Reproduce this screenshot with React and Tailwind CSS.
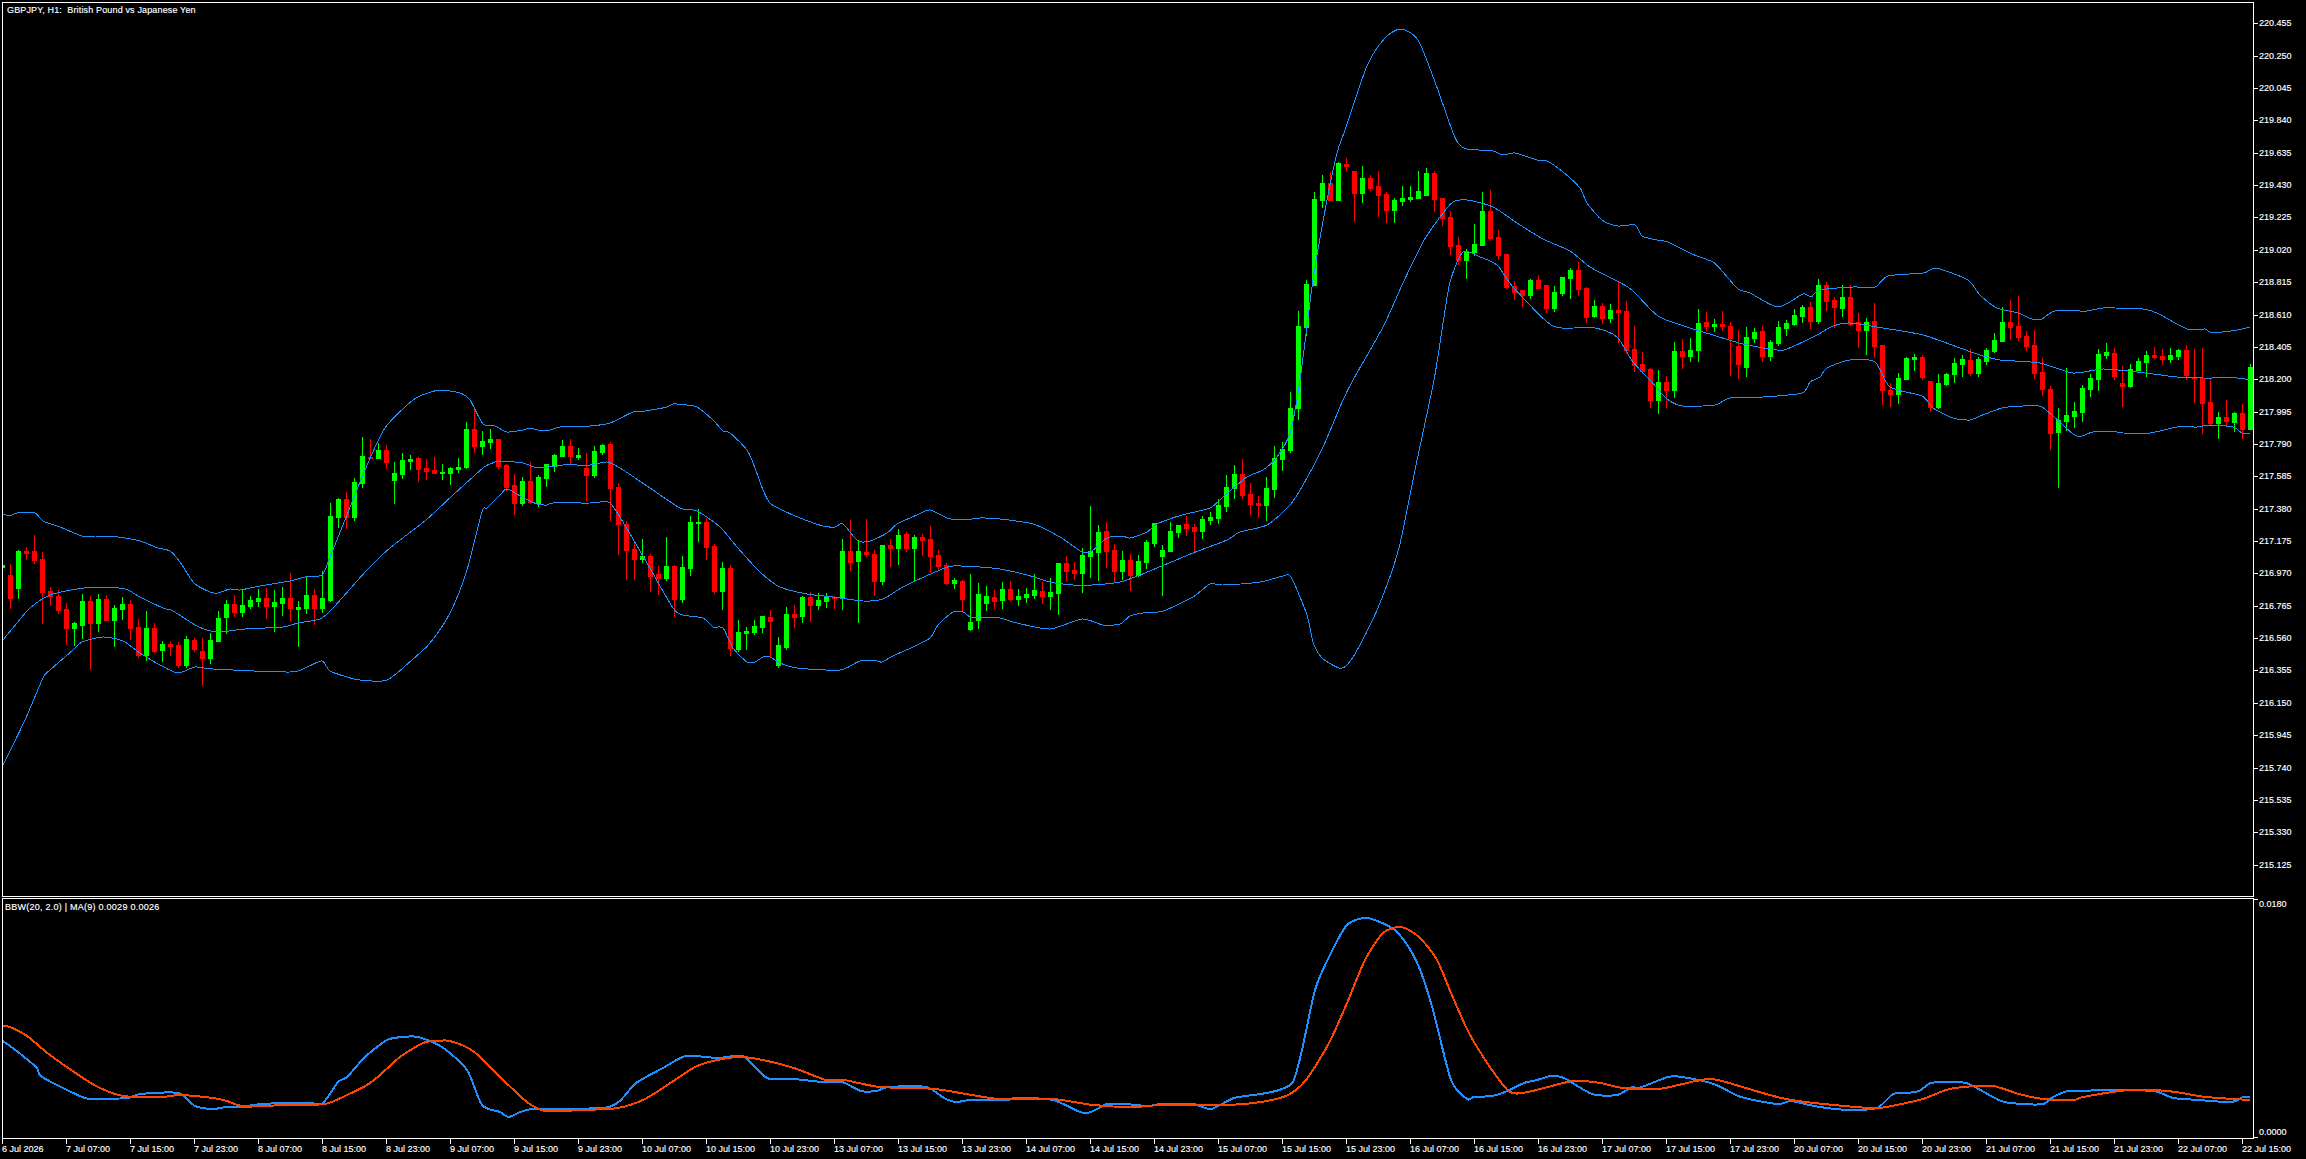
const PRICES = ['220.455','220.250','220.045','219.840','219.635','219.430','219.225','219.020','218.815','218.610','218.405','218.200','217.995','217.790','217.585','217.380','217.175','216.970','216.765','216.560','216.355','216.150','215.945','215.740','215.535','215.330','215.125']

const TIMES = ['6 Jul 2026','7 Jul 07:00','7 Jul 15:00','7 Jul 23:00','8 Jul 07:00','8 Jul 15:00','8 Jul 23:00','9 Jul 07:00','9 Jul 15:00','9 Jul 23:00','10 Jul 07:00','10 Jul 15:00','10 Jul 23:00','13 Jul 07:00','13 Jul 15:00','13 Jul 23:00','14 Jul 07:00','14 Jul 15:00','14 Jul 23:00','15 Jul 07:00','15 Jul 15:00','15 Jul 23:00','16 Jul 07:00','16 Jul 15:00','16 Jul 23:00','17 Jul 07:00','17 Jul 15:00','17 Jul 23:00','20 Jul 07:00','20 Jul 15:00','20 Jul 23:00','21 Jul 07:00','21 Jul 15:00','21 Jul 23:00','22 Jul 07:00','22 Jul 15:00']

// [bull, high, bodyTop, bodyBottom, low] in page pixels, one bar every 8px
const CANDLES = [
  [1,565,565,567,567],[0,564,575,598,608],[1,550,551,588,598],[0,547,551,553,559],[0,535,551,560,563],
  [0,552,559,592,623],[0,587,591,596,605],[0,590,596,610,613],[0,603,609,628,644],[1,622,623,628,645],
  [1,594,601,625,638],[0,596,601,623,669],[1,594,599,623,631],[0,595,599,620,620],[1,605,608,620,646],
  [1,597,604,609,619],[0,600,604,628,639],[0,619,627,655,657],[1,611,628,655,660],[0,623,628,651,652],
  [1,641,644,650,661],[0,641,644,646,655],[0,642,645,665,667],[1,636,639,665,667],[0,638,640,649,651],
  [0,638,651,658,685],[1,633,640,658,663],[1,611,618,641,641],[1,600,604,617,633],[0,595,604,612,616],
  [1,589,605,612,616],[1,596,600,606,608],[1,589,598,601,606],[0,588,598,606,618],[1,590,602,606,631],
  [1,587,598,603,615],[0,573,598,608,620],[1,601,607,609,646],[1,577,595,608,613],[0,589,595,608,624],
  [1,571,598,608,612],[1,503,516,600,601],[1,498,499,517,527],[0,492,499,517,528],[1,478,482,517,520],
  [1,437,456,483,487],[0,439,457,458,458],[1,443,450,458,458],[0,445,450,462,468],[1,462,473,480,503],
  [1,453,460,474,478],[1,455,459,461,469],[0,457,458,469,481],[0,459,468,471,479],[0,457,470,473,473],
  [1,464,472,473,479],[1,467,468,473,484],[1,458,467,469,472],[1,422,429,467,468],[0,409,429,446,452],
  [1,431,441,446,454],[1,429,439,442,448],[0,439,439,466,468],[0,464,465,487,490],[0,474,485,503,514],
  [1,477,481,503,505],[0,462,481,502,503],[1,475,477,503,506],[1,464,464,478,486],[1,454,455,466,471],
  [1,440,446,456,456],[0,439,446,456,463],[1,448,455,457,459],[0,453,468,475,500],[1,446,451,475,477],
  [1,444,445,452,454],[0,442,444,488,520],[0,483,487,524,554],[0,521,524,550,579],[0,542,549,559,579],
  [1,539,556,559,562],[0,554,556,576,591],[0,566,574,578,594],[1,537,566,578,580],[0,565,566,599,616],
  [1,556,567,599,602],[1,516,522,568,575],[1,509,522,523,541],[0,518,522,547,559],[0,544,546,591,593],
  [1,562,568,591,609],[0,565,568,648,655],[1,620,632,649,651],[1,627,631,633,649],[1,620,626,632,634],
  [1,616,616,627,632],[0,610,617,621,657],[1,637,645,665,667],[1,607,614,647,649],[0,605,614,617,627],
  [1,596,597,616,622],[0,592,597,605,621],[1,593,600,605,609],[1,593,597,601,607],[0,596,597,598,608],
  [1,539,551,598,609],[0,520,551,562,570],[1,540,551,561,622],[0,519,552,554,556],[0,550,554,581,595],
  [1,545,545,581,584],[0,539,545,548,566],[1,529,535,548,564],[0,532,534,548,551],[1,535,537,548,580],
  [0,534,537,540,555],[0,526,539,556,572],[0,550,555,566,570],[0,563,565,583,584],[1,578,580,583,588],
  [0,580,581,599,610],[1,574,622,629,630],[1,583,594,620,628],[1,586,596,603,610],[0,590,597,601,608],
  [1,582,589,600,608],[0,581,589,599,600],[1,589,596,599,605],[1,588,594,597,602],[1,574,590,595,598],
  [0,582,591,596,603],[1,578,592,596,609],[1,563,563,593,614],[0,556,563,571,580],[0,562,570,573,579],
  [1,548,555,573,592],[1,506,551,556,577],[1,525,532,552,580],[0,522,531,551,567],[0,544,550,571,581],
  [1,551,560,571,579],[0,554,560,575,590],[1,555,561,575,576],[1,540,542,562,568],[1,523,523,543,546],
  [1,545,550,556,595],[1,522,531,551,551],[1,525,525,532,537],[0,516,524,528,535],[0,524,527,531,553],
  [1,516,519,531,538],[1,512,517,520,524],[1,499,505,518,523],[1,475,487,506,511],[1,465,474,488,498],
  [0,459,474,495,498],[0,483,494,504,514],[0,496,503,505,517],[1,477,488,505,520],[1,446,458,489,497],
  [1,442,449,459,470],[1,392,408,450,452],[1,311,326,408,419],[1,280,284,327,335],[1,192,199,285,285],
  [1,175,183,200,207],[0,172,183,200,200],[1,162,163,200,200],[0,158,164,166,170],[0,171,171,193,221],
  [1,166,178,193,202],[0,175,178,188,190],[0,171,186,195,216],[0,192,194,210,222],[1,198,200,210,222],
  [1,186,198,201,205],[1,186,197,199,201],[1,171,191,198,198],[1,168,173,195,195],[0,171,173,199,211],
  [0,198,198,218,225],[0,211,217,246,254],[0,237,245,260,264],[1,249,251,260,278],[1,224,244,252,255],
  [1,192,211,245,245],[0,190,211,238,240],[0,230,237,255,259],[0,254,254,287,288],[0,281,286,292,299],
  [0,290,290,295,306],[1,279,280,295,298],[0,275,280,288,288],[0,285,285,308,312],[1,286,292,308,311],
  [1,277,277,293,295],[1,268,270,278,298],[0,262,270,289,295],[0,287,288,317,322],[1,300,306,316,317],
  [0,303,306,318,323],[1,304,310,318,322],[0,282,310,312,342],[0,301,311,350,353],[0,326,349,365,371],
  [0,352,364,371,373],[0,368,369,400,407],[1,370,382,400,413],[0,376,382,390,407],[1,342,351,390,397],
  [0,339,351,356,368],[1,338,350,356,361],[1,309,323,350,361],[0,312,322,326,330],[1,319,324,326,331],
  [0,311,324,326,330],[0,322,326,338,375],[0,330,346,364,378],[1,327,337,367,376],[1,328,332,338,342],
  [0,326,331,356,361],[1,340,342,356,360],[1,321,327,343,345],[1,320,323,328,335],[1,309,315,324,325],
  [1,305,307,316,322],[0,302,307,321,328],[1,279,285,321,323],[0,282,285,301,310],[0,297,300,307,327],
  [1,285,297,308,316],[0,285,297,324,325],[0,313,322,330,347],[1,318,322,330,354],[0,303,321,346,357],
  [0,345,345,390,404],[0,383,390,394,406],[1,373,378,394,403],[1,357,358,379,379],[1,354,357,359,370],
  [0,355,357,377,379],[0,381,381,407,411],[1,374,383,407,408],[1,373,374,384,385],[1,358,363,374,382],
  [1,355,359,364,376],[0,349,360,373,375],[1,357,359,373,376],[1,348,350,361,364],[1,333,340,351,352],
  [1,307,322,341,341],[0,300,322,327,339],[0,296,326,337,340],[0,331,336,346,350],[0,330,345,373,378],
  [0,358,372,389,395],[0,386,389,433,449],[1,408,420,432,487],[1,368,415,421,430],[1,402,411,416,427],
  [1,385,388,412,421],[1,374,378,389,396],[1,349,354,379,390],[1,343,352,355,358],[0,348,353,376,379],
  [0,366,383,386,406],[1,364,369,386,387],[1,358,361,370,370],[1,351,355,362,376],[0,347,355,357,358],
  [0,349,356,359,364],[1,348,355,359,362],[1,349,350,356,359],[0,345,350,375,379],[0,349,377,378,402],
  [0,348,378,403,433],[0,379,402,423,425],[1,412,417,423,438],[0,400,417,421,426],[1,412,413,422,431],
  [0,404,413,429,438],[1,364,367,429,429],
]

const BAND_UPPER = [3,514,10,516,17,513,35,513,43,521,60,527,82,536,95,537,118,537,140,541,158,548,170,551,180,562,194,583,210,592,218,593,230,589,240,590,260,586,290,581,305,577,322,575,330,557,347,515,365,470,385,428,413,400,428,393,441,390,460,393,470,400,483,424,495,426,507,432,523,430,530,428,538,430,550,430,560,427,590,426,610,423,633,412,645,411,667,407,673,404,687,405,697,407,713,420,723,431,730,433,747,450,755,468,763,490,770,503,780,509,800,518,823,526,835,527,843,524,858,541,870,541,887,533,897,524,917,515,930,510,947,518,963,520,980,518,1000,519,1033,524,1060,537,1082,552,1092,551,1107,538,1122,536,1130,538,1147,532,1157,524,1182,515,1210,508,1223,497,1247,477,1263,470,1277,457,1290,433,1300,380,1313,280,1327,200,1337,153,1345,130,1367,66,1385,38,1401,29,1418,40,1435,82,1452,130,1458,143,1467,149,1493,151,1503,155,1515,153,1537,160,1547,161,1563,172,1580,188,1587,203,1602,220,1618,226,1635,225,1642,236,1657,240,1668,242,1692,254,1713,262,1723,272,1738,289,1750,293,1778,307,1803,294,1811,297,1820,290,1853,287,1875,287,1888,276,1923,273,1932,269,1940,269,1968,280,1980,295,1997,308,2018,313,2032,319,2042,319,2055,311,2087,311,2103,308,2143,309,2157,313,2187,329,2205,329,2210,332,2222,332,2237,330,2250,327]

const BAND_MID = [3,640,17,623,30,608,50,595,77,589,97,587,125,589,140,597,163,608,173,611,197,626,217,632,245,629,283,627,298,623,320,619,333,608,367,570,390,548,426,520,453,495,483,468,490,464,500,461,523,463,538,468,563,465,590,465,607,462,620,468,650,488,680,508,697,511,720,527,737,547,760,572,780,587,807,594,833,597,863,601,883,599,903,587,940,570,953,566,980,567,1000,569,1027,575,1050,582,1073,585,1092,585,1120,582,1140,575,1157,568,1193,553,1227,540,1240,532,1267,525,1290,505,1303,485,1323,447,1343,400,1353,380,1383,327,1403,283,1423,242,1440,217,1453,202,1467,200,1493,207,1517,223,1543,239,1570,251,1590,267,1617,281,1632,290,1658,316,1687,327,1713,335,1743,344,1777,350,1787,349,1817,335,1833,326,1850,323,1883,328,1923,335,1960,348,1980,355,2000,360,2040,363,2073,373,2103,369,2137,372,2177,377,2203,378,2237,378,2250,380]

const BAND_LOWER = [3,765,25,720,43,678,50,670,73,650,82,642,103,637,123,641,140,653,160,665,178,673,195,667,213,669,290,672,307,667,322,661,330,671,347,677,360,680,387,680,413,659,430,643,450,613,467,570,482,512,487,508,500,495,507,489,522,497,537,504,547,505,553,503,590,503,600,502,610,503,623,522,647,563,673,608,683,615,703,618,713,627,723,628,733,648,747,662,755,662,763,657,770,657,780,663,797,668,840,670,860,661,877,661,882,662,893,656,913,647,930,638,938,625,953,612,963,612,970,617,980,617,1000,618,1017,623,1050,629,1082,619,1103,625,1120,624,1130,616,1143,613,1163,611,1193,597,1210,584,1223,585,1260,582,1283,576,1291,577,1307,615,1313,642,1322,658,1339,668,1347,665,1360,645,1380,603,1399,548,1415,470,1434,380,1442,330,1450,282,1463,252,1480,257,1497,265,1513,287,1547,322,1562,328,1595,328,1617,337,1633,362,1650,380,1667,399,1683,406,1715,405,1730,398,1763,397,1802,393,1810,382,1820,377,1827,368,1850,360,1875,362,1890,387,1922,396,1933,408,1953,418,1970,420,1980,416,2002,408,2023,406,2042,407,2073,434,2082,436,2093,432,2117,432,2123,433,2150,433,2177,427,2197,427,2210,425,2233,427,2242,433,2250,433]

const BBW = [3,1041,18,1052,37,1068,42,1077,82,1097,95,1099,128,1098,140,1094,178,1093,195,1106,213,1109,227,1107,250,1107,252,1105,283,1103,310,1103,323,1103,338,1082,347,1077,365,1057,387,1040,403,1037,418,1037,442,1047,467,1070,482,1105,500,1112,509,1117,532,1109,609,1107,636,1083,663,1068,686,1056,717,1058,734,1056,745,1057,767,1078,794,1079,822,1082,842,1082,861,1091,876,1091,889,1087,926,1087,944,1098,956,1102,971,1100,1007,1100,1016,1098,1053,1100,1080,1112,1091,1112,1107,1104,1125,1104,1148,1106,1161,1104,1193,1104,1211,1109,1234,1098,1261,1094,1279,1090,1293,1082,1302,1050,1315,990,1329,957,1347,925,1367,918,1392,928,1406,943,1419,967,1433,1010,1451,1080,1467,1099,1474,1097,1492,1096,1505,1092,1524,1083,1537,1080,1551,1076,1564,1078,1592,1094,1617,1095,1632,1087,1639,1088,1668,1077,1682,1077,1714,1084,1741,1097,1777,1104,1791,1101,1809,1105,1827,1108,1850,1110,1877,1108,1893,1094,1906,1093,1919,1091,1931,1083,1953,1082,1969,1084,2001,1101,2023,1104,2043,1104,2053,1097,2068,1091,2086,1091,2099,1090,2153,1091,2173,1098,2199,1100,2226,1102,2236,1101,2243,1097,2250,1097]

const BBW_MA = [3,1026,10,1027,27,1036,50,1055,83,1078,100,1088,123,1096,162,1097,180,1095,213,1098,227,1101,243,1106,290,1105,325,1104,347,1095,367,1085,380,1075,400,1057,423,1043,437,1041,450,1041,473,1051,500,1077,527,1102,545,1111,582,1110,618,1108,645,1099,672,1082,695,1067,717,1060,740,1057,763,1060,794,1068,826,1080,844,1080,880,1087,935,1089,998,1099,1053,1099,1093,1105,1134,1107,1161,1105,1225,1105,1261,1102,1288,1095,1306,1080,1329,1043,1347,1003,1365,960,1383,933,1401,927,1419,937,1437,960,1451,993,1469,1033,1492,1070,1510,1092,1528,1092,1573,1081,1600,1083,1623,1088,1659,1089,1696,1081,1718,1080,1786,1099,1868,1108,1886,1107,1906,1103,1923,1099,1946,1090,1963,1087,1993,1086,2019,1094,2043,1099,2073,1100,2083,1097,2119,1091,2133,1090,2153,1090,2176,1092,2206,1097,2250,1100]

// Catmull-Rom through the sampled points so the curves don't look faceted
function smoothPath(flat) {
  const pts = []
  for (let i = 0; i < flat.length; i += 2) pts.push([flat[i], flat[i + 1]])
  let d = `M${pts[0][0]},${pts[0][1]}`
  for (let i = 0; i < pts.length - 1; i++) {
    const p0 = pts[Math.max(i - 1, 0)]
    const p1 = pts[i]
    const p2 = pts[i + 1]
    const p3 = pts[Math.min(i + 2, pts.length - 1)]
    const k = 1 / 8
    d += ` C${p1[0] + (p2[0] - p0[0]) * k},${p1[1] + (p2[1] - p0[1]) * k} ${p2[0] - (p3[0] - p1[0]) * k},${p2[1] - (p3[1] - p1[1]) * k} ${p2[0]},${p2[1]}`
  }
  return d
}

function Line({ data, color, width = 1 }) {
  return <path d={smoothPath(data)} fill="none" stroke={color} strokeWidth={width} shapeRendering="crispEdges" />
}

function Candle({ bar, index }) {
  const [bull, high, top, bottom, low] = bar
  const x = 2 + index * 8
  const color = bull ? '#00ff00' : '#ff0000'
  return (
    <g fill={color} shapeRendering="crispEdges">
      <rect x={x} y={high} width={1} height={low - high + 1} />
      <rect x={x - 2} y={top} width={5} height={bottom - top + 1} />
    </g>
  )
}

function PriceChart() {
  return (
    <svg className="block w-[2250px] h-[893px]" viewBox="3 3 2250 893">
      {CANDLES.map((bar, i) => <Candle key={i} bar={bar} index={i} />)}
      <Line data={BAND_UPPER} color="#1e90ff" />
      <Line data={BAND_MID} color="#1e90ff" />
      <Line data={BAND_LOWER} color="#1e90ff" />
    </svg>
  )
}

function WidthChart() {
  return (
    <svg className="block w-[2250px] h-[239px]" viewBox="3 899 2250 239">
      <Line data={BBW} color="#1e90ff" width={2} />
      <Line data={BBW_MA} color="#ff4500" width={2} />
    </svg>
  )
}

export default function App() {
  return (
    <div className="w-[2306px] h-[1159px] overflow-hidden bg-black pl-[2px] pt-[2px] text-white text-[9px] leading-[11px] font-['Liberation_Sans',sans-serif] whitespace-pre [-webkit-text-stroke:0.15px_white]">
      {/* Price pane */}
      <div className="flex h-[895px]">
        <div className="relative w-[2252px] border border-white">
          <span className="absolute left-[4px] top-[2px] tracking-[0.15px]">GBPJPY, H1:  British Pound vs Japanese Yen</span>
          <PriceChart />
        </div>
        <div className="flex flex-col pt-[5.6px]">
          {PRICES.map((p) => (
            <div key={p} className="flex h-[32.36px] items-center gap-px">
              <div className="w-[4px] h-px bg-white" />
              <span>{p}</span>
            </div>
          ))}
        </div>
      </div>

      {/* BBW pane */}
      <div className="flex h-[241px] mt-px">
        <div className="relative w-[2252px] border border-white">
          <span className="absolute left-[2px] top-[3px] tracking-[0.25px]">BBW(20, 2.0) | MA(9) 0.0029 0.0026</span>
          <WidthChart />
        </div>
        <div className="flex flex-col justify-between">
          <div className="flex items-start gap-px pt-px">
            <div className="w-[4px] h-px bg-white" />
            <span>0.0180</span>
          </div>
          <div className="flex items-end gap-px pb-px">
            <div className="w-[4px] h-px bg-white" />
            <span>0.0000</span>
          </div>
        </div>
      </div>

      {/* Time axis */}
      <div className="flex">
        {TIMES.map((t) => (
          <div key={t} className="w-[64px] shrink-0">
            <div className="w-px h-[5px] bg-white" />
            <div>{t}</div>
          </div>
        ))}
      </div>
    </div>
  )
}
